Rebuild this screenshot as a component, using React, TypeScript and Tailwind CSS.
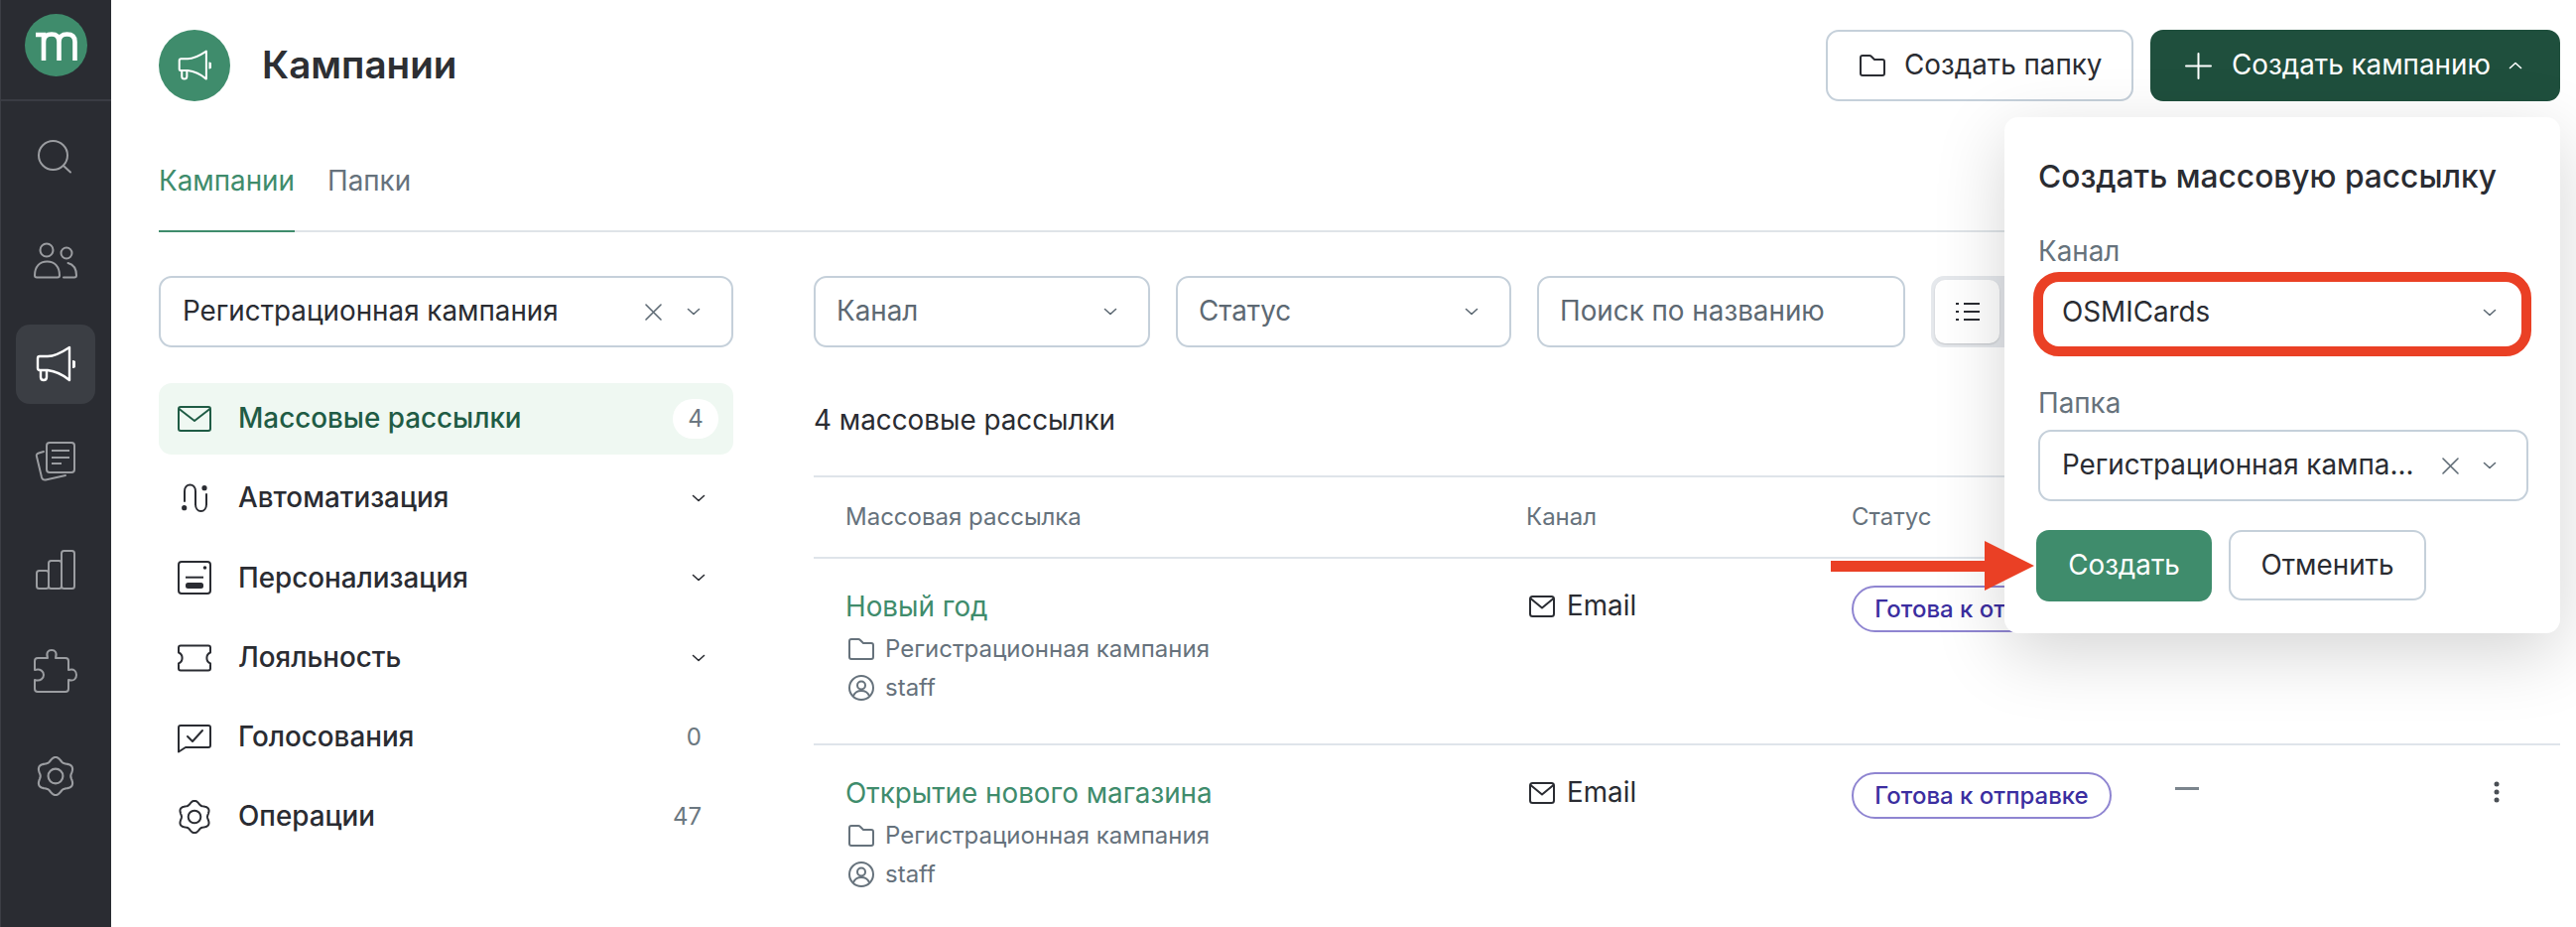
import React from "react";

const Chevron = ({ up = false, className = "" }: { up?: boolean; className?: string }) => (
  <svg width="14" height="8" viewBox="0 0 14 8" fill="none" className={className}>
    <path d={up ? "M1.5 6.5 7 1.5l5.5 5" : "M1.5 1.5 7 6.5l5.5-5"} stroke="currentColor" strokeWidth="1.6" strokeLinecap="round" strokeLinejoin="round" />
  </svg>
);

const Cross = () => (
  <svg width="17" height="17" viewBox="0 0 17 17" fill="none" className="text-[#5f6b75]">
    <path d="M1 1l15 15M16 1 1 16" stroke="currentColor" strokeWidth="1.6" strokeLinecap="round" />
  </svg>
);

const Folder = ({ w = 26, h = 22 }: { w?: number; h?: number }) => (
  <svg width={w} height={h} viewBox="0 0 26 22" fill="none">
    <path d="M3 1h7q1 0 2 1l3 3h8q2 0 2 2v12q0 2-2 2H3q-2 0-2-2V3q0-2 2-2Z" stroke="currentColor" strokeWidth="2" strokeLinejoin="round" />
  </svg>
);

const Mail = () => (
  <svg width="26" height="22" viewBox="0 0 26 22" fill="none">
    <rect x="1" y="1" width="24" height="20" rx="2.5" stroke="currentColor" strokeWidth="2" />
    <path d="M1.5 3 13 12.5 24.5 3" stroke="currentColor" strokeWidth="2" strokeLinejoin="round" />
  </svg>
);

const Megaphone = ({ size = 40 }: { size?: number }) => (
  <svg width={size} height={size} viewBox="0 0 40 38" fill="none">
    <path d="M4 11h8c8 0 16-5 22-9v33c-6-5-14-9-22-10H4q-2 0-2-2V13q0-2 2-2Z" stroke="white" strokeWidth="2.4" strokeLinejoin="round" />
    <path d="M5 25v7q0 3 3 3t3-3v-6" stroke="white" strokeWidth="2.4" />
    <path d="M37 15a4 4 0 0 1 0 8Z" fill="white" />
  </svg>
);

const gearPath = (cx: number, cy: number, r: number, a: number) => {
  let d = "";
  for (let i = 0; i <= 120; i++) {
    const t = (i / 120) * Math.PI * 2;
    const rr = r + a * Math.cos(6 * t);
    const x = cx + rr * Math.sin(t);
    const y = cy - rr * Math.cos(t);
    d += (i === 0 ? "M" : "L") + x.toFixed(2) + " " + y.toFixed(2);
  }
  return d + "Z";
};

const Gear = ({ size = 34, sw = 2 }: { size?: number; sw?: number }) => (
  <svg width={size} height={size} viewBox="0 0 34 34" fill="none">
    <path d={gearPath(17, 17, 14.6, 1.6)} stroke="currentColor" strokeWidth={sw} strokeLinejoin="round" />
    <circle cx="17" cy="17" r="6.3" stroke="currentColor" strokeWidth={sw} />
  </svg>
);

const sideIcons = [
  <svg key="s" width="80" height="80" viewBox="16 117 80 80" fill="none">
    <circle cx="53.5" cy="156.5" r="14.5" stroke="currentColor" strokeWidth="2" />
    <path d="M64 167l7 6.5" stroke="currentColor" strokeWidth="2" strokeLinecap="round" />
  </svg>,
  <svg key="u" width="80" height="80" viewBox="16 222 80 80" fill="none">
    <circle cx="47" cy="252" r="6.5" stroke="currentColor" strokeWidth="2" />
    <circle cx="67" cy="255" r="5.5" stroke="currentColor" strokeWidth="2" />
    <path d="M37 279.5q-2 0-2-2c0-9 5-14 12.500-14s12.500 5 12.500 14q0 2-2 2Z" stroke="currentColor" strokeWidth="2" strokeLinejoin="round" />
    <path d="M64 279.500h11q2 0 2-2c0-6-3-11-8.500-12.500" stroke="currentColor" strokeWidth="2" strokeLinecap="round" />
  </svg>,
  <Megaphone key="m" size={40} />,
  <svg key="d" width="44" height="46" viewBox="0 0 44 46" fill="none" className="mt-[-14px]">
    <rect x="13" y="4" width="28" height="30" rx="3" stroke="currentColor" strokeWidth="2" />
    <path d="M18 12h18M18 19h18M18 25h10" stroke="currentColor" strokeWidth="2" />
    <path d="M10 13l-5 1.500q-3 1-2 3.500l5 21q1 3 4 2.500L32 37" stroke="currentColor" strokeWidth="2" strokeLinecap="round" />
  </svg>,
  <svg key="b" width="40" height="40" viewBox="0 0 40 40" fill="none" className="mt-[-6px]">
    <rect x="1" y="21" width="12" height="18" rx="2.500" stroke="currentColor" strokeWidth="2" />
    <rect x="13" y="11" width="13" height="28" rx="2.500" stroke="currentColor" strokeWidth="2" />
    <rect x="26" y="1" width="13" height="38" rx="2.500" stroke="currentColor" strokeWidth="2" />
  </svg>,
  <svg key="p" width="44" height="44" viewBox="0 0 44 44" fill="none" className="mt-[-12px]">
    <path d="M4 9h10c-2-6 1-8 4-8s6 2 4 8h10q3 0 3 3v9c6-2 8 2 8 5s-2 7-8 5v9q0 3-3 3H4q-3 0-3-3v-9c6 2 9-2 9-5s-3-7-9-5v-9q0-3 3-3Z" stroke="currentColor" strokeWidth="2" strokeLinejoin="round" />
  </svg>,
  <div key="g" className="mt-[-10px]">
    <Gear size={40} sw={1.8} />
  </div>,
];

const menu = [
  {
    label: "Массовые рассылки",
    active: true,
    badge: "4",
    icon: (
      <svg width="34" height="26" viewBox="0 0 34 26" fill="none">
        <rect x="1" y="1" width="32" height="24" rx="2" stroke="currentColor" strokeWidth="2" />
        <path d="M1.500 3 17 15 32.500 3" stroke="currentColor" strokeWidth="2" strokeLinejoin="round" />
      </svg>
    ),
  },
  {
    label: "Автоматизация",
    chevron: true,
    icon: (
      <svg width="34" height="34" viewBox="0 0 34 34" fill="none">
        <path d="M7 20V10c0-4 2.500-6.500 5.500-6.500S18 6 18 10v13c0 4.500 2.500 7 5.500 7s5.500-2.500 5.500-7V13" stroke="currentColor" strokeWidth="2" strokeLinecap="round" />
        <circle cx="6.700" cy="26.700" r="2.600" fill="currentColor" />
        <circle cx="27" cy="6.700" r="2.600" fill="currentColor" />
      </svg>
    ),
  },
  {
    label: "Персонализация",
    chevron: true,
    icon: (
      <svg width="34" height="34" viewBox="0 0 34 34" fill="none">
        <rect x="1" y="1" width="32" height="32" rx="3" stroke="currentColor" strokeWidth="2" />
        <circle cx="27.500" cy="7" r="1.800" fill="currentColor" />
        <path d="M8 16.700h18" stroke="currentColor" strokeWidth="2" />
        <rect x="8" y="22" width="18" height="6" rx="2.500" fill="currentColor" />
      </svg>
    ),
  },
  {
    label: "Лояльность",
    chevron: true,
    icon: (
      <svg width="34" height="34" viewBox="0 0 34 34" fill="none">
        <path d="M3 4.500h28q2 0 2 2v5a6 6 0 0 0 0 11v5q0 2-2 2H3q-2 0-2-2v-5a6 6 0 0 0 0-11v-5q0-2 2-2Z" stroke="currentColor" strokeWidth="2" strokeLinejoin="round" />
      </svg>
    ),
  },
  {
    label: "Голосования",
    count: "0",
    icon: (
      <svg width="34" height="34" viewBox="0 0 34 34" fill="none">
        <path d="M3 5h28q2 0 2 2v18q0 2-2 2H8l-7 4.500V7q0-2 2-2Z" stroke="currentColor" strokeWidth="2" strokeLinejoin="round" />
        <path d="M10 16l5 5 10-11" stroke="currentColor" strokeWidth="2" strokeLinecap="round" strokeLinejoin="round" />
      </svg>
    ),
  },
  { label: "Операции", count: "47", icon: <Gear /> },
];

const rows = ["Новый год", "Открытие нового магазина"];

function FilterSelect({ label, width }: { label: string; width: string }) {
  return (
    <div className={`${width} h-[72px] shrink-0 flex items-center justify-between pl-[21px] pr-[31px] border-2 border-[#c5d0da] rounded-[13px] text-[#5d6973]`}>
      <span>{label}</span>
      <Chevron />
    </div>
  );
}

export default function App() {
  return (
    <div className="flex w-full h-[934px] overflow-hidden bg-white [font-family:Inter,'Noto_Sans',sans-serif] text-[27.8px] text-[#2a2c32]">
      {/* Sidebar */}
      <aside className="w-[112px] shrink-0 bg-[#2a2c32] border-l border-[#3c3e45] text-[#9b9da1]">
        <div className="h-[102px] border-b-2 border-[#3a3c43] flex justify-center pt-[14px]">
          <div className="w-[63px] h-[63px] rounded-full bg-[#3f8c6c] flex items-center justify-center">
            <svg width="46" height="30" viewBox="0 0 46 30" fill="none">
              <path d="M2 4h8v26M10 11c0-5 3-7.500 8-7.500s7.500 2.500 7.500 7.500v19M25.500 11c0-5 3-7.500 8-7.500s8 2.500 8 7.500v19" stroke="white" strokeWidth="4.600" />
            </svg>
          </div>
        </div>
        <nav className="flex flex-col items-center gap-[25px] pt-[15px] pr-[1px]">
          {sideIcons.map((icon, i) => (
            <div key={i} className={`w-[80px] h-[80px] rounded-[14px] flex items-center justify-center ${i === 2 ? "bg-[#3b3e44]" : ""}`}>
              {icon}
            </div>
          ))}
        </nav>
      </aside>

      {/* Main */}
      <main className="relative flex-1 min-w-0 pl-[48px] pr-[16px] pt-[30px]">
        <header className="h-[72px] flex items-center">
          <div className="w-[72px] h-[72px] rounded-full bg-[#3f8c6c] flex items-center justify-center">
            <Megaphone size={34} />
          </div>
          <h1 className="ml-[32px] text-[38.6px] font-semibold text-[#2d2f33]">Кампании</h1>
          <div className="ml-auto flex gap-[17px]">
            <button className="h-[72px] w-[310px] pl-[32px] flex items-center gap-[19px] border-2 border-[#c5d0da] rounded-[13px]">
              <Folder />
              Создать папку
            </button>
            <button className="h-[72px] w-[413px] pl-[35px] flex items-center bg-[#1f4f3d] rounded-[13px] text-white">
              <svg width="27" height="27" viewBox="0 0 27 27" fill="none">
                <path d="M13.500 1v25M1 13.500h25" stroke="white" strokeWidth="2" strokeLinecap="round" />
              </svg>
              <span className="ml-[20px]">Создать кампанию</span>
              <Chevron up className="ml-[18px]" />
            </button>
          </div>
        </header>

        <div className="mt-[64px] h-[68px] flex gap-[33px] border-b-2 border-[#dfe4e8] text-[#66727c]">
          <div className="w-[137px] h-[68px] pb-[34px] leading-[32px] border-b-2 border-[#3f8c6c] text-[#3f8c6c]">Кампании</div>
          <div className="leading-[32px]">Папки</div>
        </div>

        <div className="mt-[44px] flex gap-[81px]">
          {/* Left column */}
          <div className="w-[579px] shrink-0">
            <div className="h-[72px] flex items-center pl-[22px] pr-[31px] border-2 border-[#c5d0da] rounded-[13px]">
              <span className="flex-1">Регистрационная кампания</span>
              <Cross />
              <Chevron className="ml-[25px] text-[#5f6b75]" />
            </div>
            <div className="mt-[36px] flex flex-col gap-[8.2px]">
              {menu.map((m) => (
                <div key={m.label} className={`h-[72px] flex items-center pl-[19px] rounded-[13px] ${m.active ? "bg-[#eff8f2] text-[#1f5c45] pr-[15px]" : "pr-[30px]"}`}>
                  <div className="w-[34px] flex justify-center">{m.icon}</div>
                  <span className="ml-[27px] flex-1 font-medium">{m.label}</span>
                  {m.badge && <span className="w-[46px] h-[40px] rounded-full bg-white flex items-center justify-center text-[24px] text-[#6b7780]">{m.badge}</span>}
                  {m.count && <span className="text-[24px] text-[#6b7780] mr-[2px]">{m.count}</span>}
                  {m.chevron && <Chevron className="mr-[-2px] text-[#2a2c32]" />}
                </div>
              ))}
            </div>
          </div>

          {/* Right column */}
          <div className="flex-1 min-w-0">
            <div className="flex gap-[26px]">
              <FilterSelect label="Канал" width="w-[339px]" />
              <FilterSelect label="Статус" width="w-[338px]" />
              <div className="w-[371px] h-[72px] shrink-0 flex items-center pl-[21px] border-2 border-[#c5d0da] rounded-[13px] text-[#5d6973]">Поиск по названию</div>
              <div className="w-[140px] h-[72px] shrink-0 p-[4px] bg-[#e5e8ec] rounded-[13px]">
                <div className="w-[65px] h-[64px] bg-white rounded-[10px] flex items-center justify-center shadow-[0_1px_2px_rgba(0,0,0,0.15)]">
                  <svg width="24" height="20" viewBox="0 0 24 20" fill="none">
                    <path d="M8 2h16M8 10h16M8 18h16M0 2h3M0 10h3M0 18h3" stroke="#2a2c32" strokeWidth="2" />
                  </svg>
                </div>
              </div>
            </div>

            <div className="mt-[53px] leading-[40px]">4 массовые рассылки</div>

            <div className="mt-[36px] grid grid-cols-[718px_328px_326px_1fr] h-[84px] items-center border-y-2 border-[#dfe4ea] text-[24px] text-[#66727c]">
              <div className="pl-[32px]">Массовая рассылка</div>
              <div>Канал</div>
              <div>Статус</div>
              <div />
            </div>

            {rows.map((title) => (
              <div key={title} className="grid grid-cols-[718px_328px_326px_1fr] h-[188px] border-b-2 border-[#dfe4ea]">
                <div className="pl-[32px] pt-[30px]">
                  <div className="leading-[36px] text-[#3f8c6c]">{title}</div>
                  <div className="mt-[9px] leading-[32px] pl-[3px] flex items-center gap-[11px] text-[24px] text-[#66727c]">
                    <Folder />
                    Регистрационная кампания
                  </div>
                  <div className="mt-[7px] leading-[32px] pl-[3px] flex items-center gap-[11px] text-[24px] text-[#66727c]">
                    <svg width="26" height="26" viewBox="0 0 26 26" fill="none">
                      <circle cx="13" cy="13" r="12" stroke="currentColor" strokeWidth="2" />
                      <circle cx="13" cy="10.500" r="4" stroke="currentColor" strokeWidth="2" />
                      <path d="M5 21c1.500-3.500 4.500-5 8-5s6.500 1.500 8 5" stroke="currentColor" strokeWidth="2" />
                    </svg>
                    staff
                  </div>
                </div>
                <div className="pt-[30px] pl-[3px]">
                  <div className="h-[36px] flex items-center gap-[12px]">
                    <Mail />
                    Email
                  </div>
                </div>
                <div className="pt-[27px]">
                  <span className="inline-flex h-[47px] w-[262px] items-center justify-center rounded-full border-2 border-[#8f85d1] text-[24px] font-medium text-[#3b2ea0]">Готова к отправке</span>
                </div>
                <div className="pt-[36px] flex justify-between items-start pr-[61px]">
                  <div className="mt-[6px] w-[24px] h-[3px] bg-[#7b858d]" />
                  <svg width="6" height="22" viewBox="0 0 6 22" fill="#4a4f55">
                    <circle cx="3" cy="3" r="2.500" />
                    <circle cx="3" cy="11" r="2.500" />
                    <circle cx="3" cy="19" r="2.500" />
                  </svg>
                </div>
              </div>
            ))}
          </div>
        </div>

        {/* Popover */}
        <div className="absolute right-[16px] top-[118px] w-[560px] h-[520px] pl-[34px] pr-[32px] pt-[42px] bg-white rounded-[14px] shadow-[0_20px_70px_rgba(0,0,0,0.17)]">
          <div className="leading-[36px] text-[31.7px] font-medium">Создать массовую рассылку</div>
          <div className="mt-[41px] leading-[32px] text-[#66727c]">Канал</div>
          <div className="relative mt-[10px] h-[72px] flex items-center justify-between pl-[24px] pr-[32px] rounded-[13px]">
            <span>OSMICards</span>
            <Chevron className="text-[#5f6b75]" />
            <div className="absolute left-[-5px] right-[-3px] top-[-5px] bottom-[-8px] border-[10px] border-[#ea4025] rounded-[26px]" />
          </div>
          <div className="mt-[39px] leading-[32px] text-[#66727c]">Папка</div>
          <div className="mt-[11px] h-[72px] flex items-center pl-[22px] pr-[30px] border-2 border-[#c5d0da] rounded-[13px]">
            <span className="flex-1">Регистрационная кампа...</span>
            <Cross />
            <Chevron className="ml-[24px] text-[#5f6b75]" />
          </div>
          <div className="mt-[29px] flex gap-[17px] ml-[-2px]">
            <button className="w-[177px] h-[72px] bg-[#3f8c6c] rounded-[13px] text-white">Создать</button>
            <button className="w-[199px] h-[71px] border-2 border-[#c5d0da] rounded-[13px]">Отменить</button>
          </div>
        </div>

        {/* Arrow annotation */}
        <svg width="205" height="50" viewBox="0 0 205 50" className="absolute left-[1733px] top-[545px]">
          <path d="M0 20h155V0l50 25-50 25V31H0Z" fill="#ea4025" />
        </svg>
      </main>
    </div>
  );
}
